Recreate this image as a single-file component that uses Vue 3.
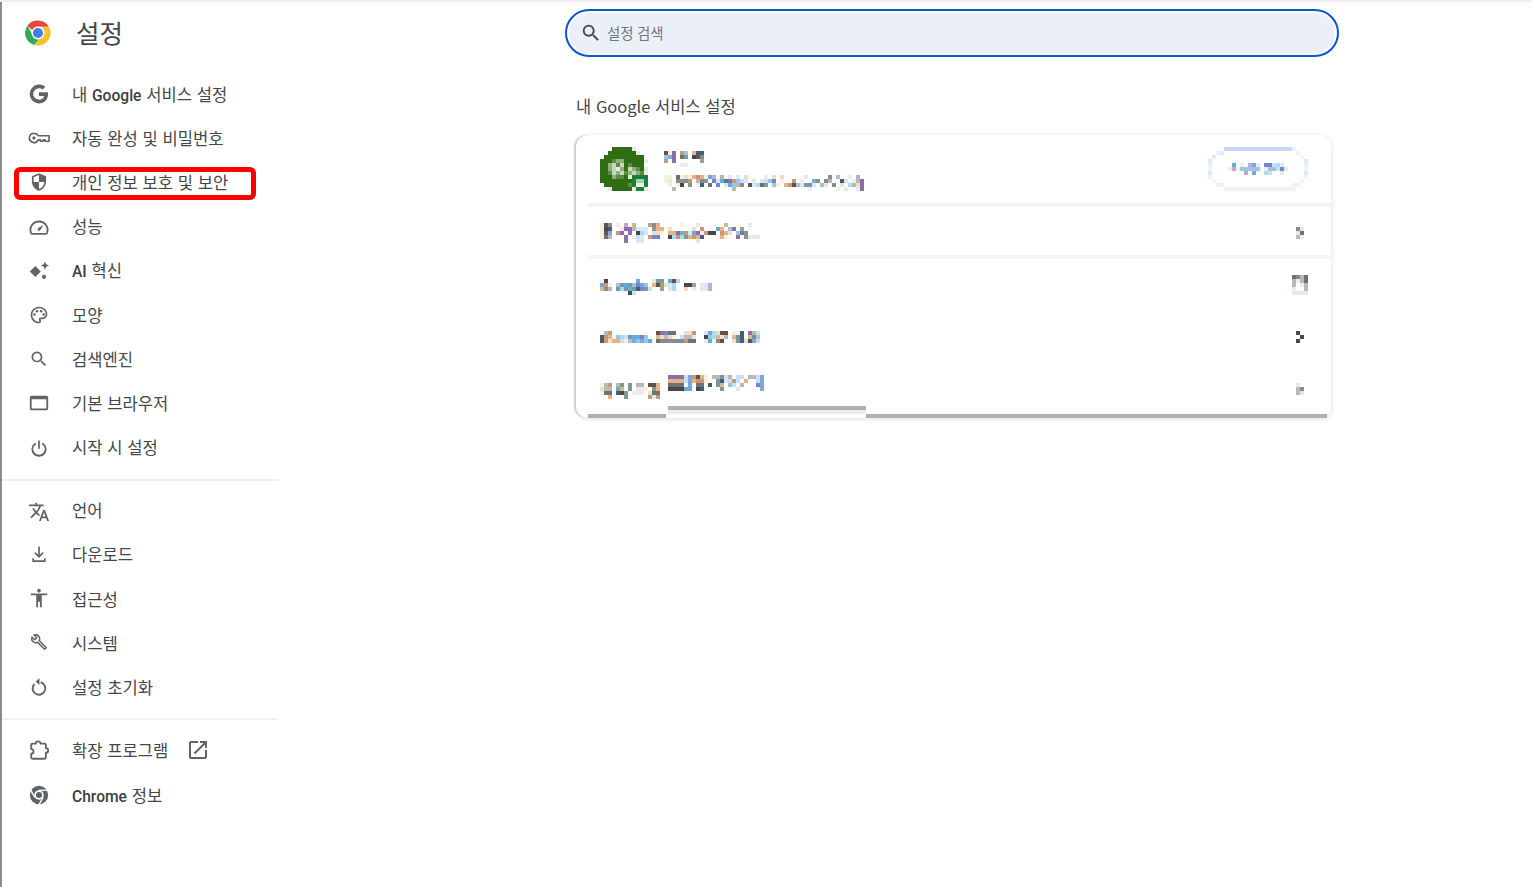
<template>
  <div class="page">
    <aside class="sidebar">
      <div class="brand">
        <svg class="chrome-logo" viewBox="0 0 24 24">
          <path d="M12 0.5a11.5 11.5 0 0 1 9.96 5.75H12a5.75 5.75 0 0 0-5.2 3.3L2.2 5.3A11.5 11.5 0 0 1 12 0.5z" fill="#e8453c" />
          <path d="M2.2 5.3l4.7 8.1a5.75 5.75 0 0 0 6.6 4.2L8.4 23A11.5 11.5 0 0 1 2.2 5.3z" fill="#34a853" />
          <path d="M21.96 6.25A11.5 11.5 0 0 1 9 23.1l4.9-5.9a5.75 5.75 0 0 0 2.3-9.5l-.2-1.45z" fill="#fbc02d" />
          <circle cx="12" cy="12" r="6" fill="#fff" />
          <circle cx="12" cy="12" r="4.7" fill="#3f7ee8" />
        </svg>
        <h1 class="brand-title">설정</h1>
      </div>

      <nav class="nav-group first">
        <a v-for="item in navTop" :key="item.label" class="nav-item" :class="{ marked: item.marked }">
          <svg class="nav-icon" :viewBox="item.box || smallBox" v-html="item.icon"></svg>
          <span class="nav-label">
            <template v-for="part in split(item.label)" :key="part.text">
              <b v-if="part.latin" class="latin">{{ part.text }}</b>
              <template v-else>{{ part.text }}</template>
            </template>
          </span>
        </a>
      </nav>
      <div class="divider"></div>
      <nav class="nav-group middle">
        <a v-for="item in navMiddle" :key="item.label" class="nav-item">
          <svg class="nav-icon" :viewBox="item.box || smallBox" v-html="item.icon"></svg>
          <span class="nav-label">{{ item.label }}</span>
        </a>
      </nav>
      <div class="divider"></div>
      <nav class="nav-group last">
        <a v-for="item in navBottom" :key="item.label" class="nav-item">
          <svg class="nav-icon" :viewBox="item.box || smallBox" v-html="item.icon"></svg>
          <span class="nav-label">
            <template v-for="part in split(item.label)" :key="part.text">
              <b v-if="part.latin" class="latin">{{ part.text }}</b>
              <template v-else>{{ part.text }}</template>
            </template>
          </span>
          <svg v-if="item.external" class="external" viewBox="0 0 24 24">
            <path d="M19 19H5V5h7V3H5c-1.11 0-2 .9-2 2v14c0 1.1.89 2 2 2h14c1.1 0 2-.9 2-2v-7h-2v7zM14 3v2h3.59l-9.83 9.83 1.41 1.41L19 6.41V10h2V3h-7z" />
          </svg>
        </a>
      </nav>
    </aside>

    <main class="content">
      <div class="search">
        <svg class="search-icon" viewBox="0 0 24 24">
          <path d="M15.5 14h-.79l-.28-.27A6.471 6.471 0 0 0 16 9.5 6.5 6.5 0 1 0 9.5 16c1.61 0 3.09-.59 4.23-1.57l.27.28v.79l5 4.99L20.49 19l-4.99-5zm-6 0C7.01 14 5 11.99 5 9.5S7.01 5 9.5 5 14 7.01 14 9.5 11.99 14 9.5 14z" />
        </svg>
        <span class="search-text">설정 검색</span>
      </div>

      <section class="section">
        <h2 class="section-title">내 Google 서비스 설정</h2>
        <div class="card">
          <div class="row row-account">
            <svg class="mosaic" :width="48" :height="44" shape-rendering="crispEdges">
              <rect v-for="(c, i) in cells(avatarRows)" :key="i" :x="c.x" :y="c.y" width="4" height="4" :fill="c.fill" />
            </svg>
            <div class="account-text">
              <svg class="mosaic" width="44" height="16" shape-rendering="crispEdges">
                <rect v-for="(c, i) in cells(nameRows)" :key="i" :x="c.x" :y="c.y" width="4" height="4" :fill="c.fill" />
              </svg>
              <svg class="mosaic" width="204" height="20" shape-rendering="crispEdges">
                <rect v-for="(c, i) in cells(emailRows)" :key="i" :x="c.x" :y="c.y" width="4" height="4" :fill="c.fill" />
              </svg>
            </div>
            <svg class="mosaic" width="100" height="44" shape-rendering="crispEdges">
              <rect v-for="(c, i) in cells(buttonRows)" :key="i" :x="c.x" :y="c.y" width="4" height="4" :fill="c.fill" />
            </svg>
          </div>
          <div v-for="row in rows" :key="row.id" class="row row-link" :class="{ ruled: row.ruled }">
            <svg class="mosaic" width="180" height="24" shape-rendering="crispEdges" :style="{ marginTop: row.top + 'px' }">
              <rect v-for="(c, i) in cells(row.cells)" :key="i" :x="c.x" :y="c.y" width="4" height="4" :fill="c.fill" />
            </svg>
            <div class="arrow-slot" :style="{ marginTop: row.arrowTop + 'px' }">
              <svg class="mosaic" :width="row.arrow[0].length * 4" :height="row.arrow.length * 4" shape-rendering="crispEdges">
                <rect v-for="(c, i) in cells(row.arrow)" :key="i" :x="c.x" :y="c.y" width="4" height="4" :fill="c.fill" />
              </svg>
            </div>
          </div>
          <div class="bottom-patch"></div>
        </div>
      </section>
    </main>
  </div>
</template>

<script setup>
const smallBox = '-1.2 -1.2 26.4 26.4'
const largeBox = '0 0 24 24'

const palette = {
  a: '#8a6fa8', b: '#7fa6dc', c: '#9cc4e8', d: '#d8e8f4', e: '#eadfc8', f: '#c89878',
  g: '#5a5a5a', h: '#8a8a8a', i: '#b8b8b8', j: '#e8e8e8', k: '#3c5f80', l: '#7a9a9a',
  m: '#e4b484', n: '#5ab0e0', o: '#c8e0f8', p: '#6a5040', q: '#98a884', r: '#f6f0dc',
  s: '#484848', t: '#7088c8', u: '#c0a8d8', v: '#f2eaf2', w: '#a8dcf6', x: '#707070',
  G: '#2f6d13', L: '#8fae7c', M: '#c8d8bc', N: '#5d8a48', W: '#e6eee0', B: '#1a7f37', S: '#a8d0b4',
  A: '#c5d8f5', Y: '#edf2fb', Z: '#dfe8fa'
}

const cells = (rows) => {
  const out = []
  rows.forEach((line, y) => {
    ;[...line].forEach((ch, x) => {
      if (ch !== '.') out.push({ x: x * 4, y: y * 4, fill: palette[ch] })
    })
  })
  return out
}

const split = (label) =>
  label.split(/([A-Za-z]+)/).filter(Boolean).map((text) => ({ text, latin: /^[A-Za-z]/.test(text) }))

const avatarRows = [
  '...GGGGGj...',
  '..GGGGGGGj..',
  '.GGGGGGGGGG.',
  'GGGNLLGGGGGj',
  'GGLMNMGNGGG.',
  'GGLMWLGMLNGj',
  'GGNMLMNLMLNj',
  'GGGLNNGWBBBB',
  'GGGGGGGGBSSB',
  '.GGGGGGNBWWB',
  '..jGGGGGjBBj'
]

const nameRows = [
  'pra.fc.mkk.',
  'cba.xl.sgh.',
  'f.a......q.',
  '....vv.....'
]

const emailRows = [
  '..................................................',
  'rr.xrermfmrnu.i.j.j.e....v.e.e.....j.....h.c..v.u.',
  'rj.hlhf.ihl.tdnxafcod.j.doct.r..f.v..bl.hi..pd.ria',
  '.r.rs.l.rk.x.t.dncih.gdwxl.cr.mfpcdlld.ij.h.d.wiea',
  '..i..............i..................v......r.j..va'
]

const buttonRows = [
  '....AAAAAAAAAAAAAAAAAY...',
  '..YZ..................Y..',
  '.Z.....................Y.',
  'Z.......................Z',
  'Y.....n.r.ubv.ttowj.....Y',
  'Y....vurccccc.vccotj....Y',
  'Z........u.b..wo..j.....Z',
  'Y.......................Y',
  '.Y.....................Y.',
  '..YY.................YY..',
  '....YYYYYYYYYYYYYYYYYY...'
]

const rows = [
  {
    id: 'more',
    top: 16,
    arrowTop: 20,
    ruled: true,
    cells: [
      'rgh.v.u.m...fhm.....r...j......m.....j..',
      'rsg..vaaiddd.lmm.e.....e.f...nm.ca.q....',
      'rgb.fa.a.swd.eer.mmabfdnavfss.fme.cal...',
      'rxi...a.vod.ftt..swfwlmfmk....mr..a.ljjj',
      '......a..dd.............d...............'
    ],
    arrow: ['hj', 'jx', 'iv']
  },
  {
    id: 'account',
    top: 20,
    arrowTop: 16,
    cells: [
      'rs.......b...jll.npw.........',
      'nfr.clnlctbc.mpqedw..ssq.jdu',
      'mhi.lwlnlktlo..q.dw..e.v.jju',
      '.......so...................'
    ],
    arrow: ['xhix', 'ivix', 'i.vi', 'v..i', 'jjjj']
  },
  {
    id: 'chrome',
    top: 20,
    arrowTop: 20,
    cells: [
      '.if...........patxx..eef..dbwepp.rrk.aio',
      'kfmrcwolnntc..momor.oiij..scwmei.mhk.mhc',
      'pfemmorcbcbcn.xhhhhhhfxx..jnrhp..elkekbo'
    ],
    arrow: ['s.', '.s', 's.']
  },
  {
    id: 'sync',
    top: 12,
    arrowTop: 20,
    cells: [
      '.................aaaaobfpmr.iilei.oo.iiob',
      '.................mmmmobmffr..lkdofo.m..ob',
      'rif.il.l.ii.ppm..xxxx.b.xx.k.lm.co.i...tb',
      'eii.nm.l.jjr.lm..ssssnn.sk....l...d.....b',
      'rxx.ksl.vvv.exx',
      '..m...l.....fdf'
    ],
    arrow: ['j.', 'ih', 'ij']
  }
]

const navTop = [
  { label: '내 Google 서비스 설정', box: largeBox, icon: '<path d="M21.6 10.2H12v3.9h5.5c-.6 2.7-2.8 4.2-5.5 4.2a6.3 6.3 0 1 1 4-11.2l2.9-2.9A10.3 10.3 0 1 0 12 22.3c5.2 0 9.9-3.7 9.9-10.3 0-.6-.1-1.2-.3-1.8z" />' },
  { label: '자동 완성 및 비밀번호', box: largeBox, icon: '<path d="M6.5 7a5 5 0 1 0 4.6 7h2.4v1.5h3V14h2v1.5H23V9.500H11.100A5 5 0 0 0 6.500 7z" fill="none" stroke="currentColor" stroke-width="1.8" stroke-linejoin="round" /><circle cx="6.500" cy="12" r="1.800" />' },
  { label: '개인 정보 보호 및 보안', marked: true, icon: '<path d="M12 1.5L3.500 5v6c0 5.300 3.600 10.200 8.500 11.500 4.900-1.300 8.500-6.200 8.500-11.500V5L12 1.500zm0 10.500h6.500c-.5 3.900-3 7.400-6.500 8.500V12H5.500V6.300L12 3.500V12z" />' },
  { label: '성능', box: largeBox, icon: '<path d="M5 19.500h14a2 2 0 0 0 1.800-1.100A9.300 9.300 0 0 0 12 6a9.300 9.300 0 0 0-8.800 12.400A2 2 0 0 0 5 19.500z" fill="none" stroke="currentColor" stroke-width="2" /><path d="M10.600 15.500a2 2 0 0 0 2.800 0l3.600-5.700-5.700 3.200a2 2 0 0 0-.7 2.500z" />' },
  { label: 'AI 혁신', box: largeBox, icon: '<path d="M8 6.500l6 6-6 6-6-6zM18.500 1.500l1.300 3.200L23 6l-3.200 1.300L18.500 10.500l-1.300-3.200L14 6l3.200-1.300zM17.500 16a2.300 2.300 0 1 1 0 4.600 2.300 2.300 0 0 1 0-4.600z" />' },
  { label: '모양', icon: '<path d="M12 22C6.490 22 2 17.510 2 12S6.490 2 12 2s10 4.040 10 9c0 3.310-2.690 6-6 6h-1.770c-.28 0-.5.220-.5.500 0 .120.050.230.130.330.410.470.640 1.060.640 1.670A2.500 2.500 0 0 1 12 22zm0-18c-4.410 0-8 3.590-8 8s3.590 8 8 8c.28 0 .5-.22.5-.5a.54.54 0 0 0-.14-.35c-.41-.46-.63-1.050-.63-1.650a2.500 2.500 0 0 1 2.500-2.500H16c2.210 0 4-1.790 4-4 0-3.860-3.590-7-8-7z" /><circle cx="6.500" cy="11.500" r="1.500" /><circle cx="9.500" cy="7.500" r="1.500" /><circle cx="14.500" cy="7.500" r="1.500" /><circle cx="17.500" cy="11.500" r="1.500" />' },
  { label: '검색엔진', icon: '<path d="M15.500 14h-.79l-.28-.27A6.471 6.471 0 0 0 16 9.500 6.500 6.500 0 1 0 9.500 16c1.610 0 3.090-.59 4.230-1.570l.27.28v.79l5 4.990L20.490 19l-4.990-5zm-6 0C7.010 14 5 11.990 5 9.500S7.010 5 9.500 5 14 7.010 14 9.500 11.990 14 9.500 14z" />' },
  { label: '기본 브라우저', box: largeBox, icon: '<path d="M20 4H4c-1.100 0-2 .9-2 2v12c0 1.100.9 2 2 2h16c1.100 0 2-.9 2-2V6c0-1.100-.9-2-2-2zm0 14H4V8h16v10z" />' },
  { label: '시작 시 설정', icon: '<path d="M11 3h2v10h-2z" /><path d="M16.500 5.800l-1.300 1.500A6.900 6.900 0 0 1 19 13a7 7 0 0 1-14 0 6.900 6.900 0 0 1 3.800-5.700L7.500 5.800A9 9 0 1 0 16.500 5.800z" />' }
]

const navMiddle = [
  { label: '언어', box: '0 -2 24 24', icon: '<path d="M12.870 15.070l-2.540-2.510.03-.03c1.740-1.940 2.980-4.170 3.710-6.530H17V4h-7V2H8v2H1v1.990h11.170C11.500 7.920 10.440 9.750 9 11.350 8.070 10.320 7.300 9.190 6.690 8h-2c.73 1.630 1.730 3.170 2.980 4.560l-5.090 5.020L4 19l5-5 3.110 3.110.76-2.040zM18.500 10h-2L12 22h2l1.120-3h4.750L21 22h2l-4.500-12zm-2.620 7l1.620-4.330L19.120 17h-3.240z" />' },
  { label: '다운로드', icon: '<path d="M11 3h2v10l3.300-3.300 1.400 1.400L12 16.800l-5.700-5.700 1.400-1.400L11 13zM4 17h2v2.500h12V17h2v4.500H4z" />' },
  { label: '접근성', box: largeBox, icon: '<path d="M12 2c1.100 0 2 .9 2 2s-.9 2-2 2-2-.9-2-2 .9-2 2-2zm9 7h-6v13h-2v-6h-2v6H9V9H3V7h18v2z" />' },
  { label: '시스템', box: '-3 -3 30 30', icon: '<path d="M22.610 18.990l-9.080-9.080c.93-2.340.45-5.100-1.440-7C9.790.61 6.210.4 3.660 2.260L7.500 6.110 6.080 7.520 2.250 3.690C.39 6.230.6 9.820 2.900 12.110c1.860 1.860 4.570 2.350 6.890 1.480l9.110 9.110c.39.39 1.020.39 1.410 0l2.300-2.300c.4-.38.4-1.010 0-1.410zm-3 1.600l-9.460-9.460c-.61.45-1.290.72-2 .82-1.360.2-2.790-.21-3.830-1.250C3.370 9.760 2.930 8.500 3 7.260l3.090 3.090 4.240-4.240-3.090-3.090c1.240-.07 2.490.37 3.440 1.310 1.080 1.080 1.490 2.570 1.240 3.960-.12.71-.42 1.370-.88 1.960l9.450 9.450-.88.880z" />' },
  { label: '설정 초기화', icon: '<path d="M14 6.300a7.600 7.600 0 1 1-7.400 1.900" fill="none" stroke="currentColor" stroke-width="2.300" /><path d="M12.500 1.500L8 5.500l4.500 4z" />' }
]

const navBottom = [
  { label: '확장 프로그램', external: true, box: largeBox, icon: '<path d="M5 5h3.500a2.500 2.500 0 0 1 5 0H18a1.500 1.500 0 0 1 1.500 1.500V10a2.500 2.500 0 0 1 0 5v5a1.500 1.500 0 0 1-1.500 1.500H5A1.500 1.500 0 0 1 3.500 20v-4a2.500 2.500 0 0 0 0-5V6.500A1.500 1.500 0 0 1 5 5z" fill="none" stroke="currentColor" stroke-width="2" stroke-linejoin="round" />' },
  { label: 'Chrome 정보', box: largeBox, icon: '<circle cx="12" cy="12" r="10" /><circle cx="12" cy="12" r="5.200" fill="#fff" /><circle cx="12" cy="12" r="3.300" /><g stroke="#fff" stroke-width="1.400"><path d="M12 6.800H22" /><path d="M12 6.800H22" transform="rotate(120 12 12)" /><path d="M12 6.800H22" transform="rotate(240 12 12)" /></g>' }
]
</script>

<style scoped>
.page {
  display: flex;
  min-height: 887px;
  border-top: 2px solid #f3edf5;
  box-sizing: border-box;
  font-family: "Noto Sans CJK KR", "Noto Sans", sans-serif;
  color: #3c4043;
  background: #fff;
}

.sidebar {
  width: 278px;
  flex-shrink: 0;
  box-sizing: border-box;
  border-left: 2px solid #8c8c8c;
}

.brand {
  display: flex;
  align-items: center;
  height: 61px;
  padding-left: 23px;
  box-sizing: border-box;
}

.chrome-logo {
  width: 26px;
  height: 26px;
}

.brand-title {
  margin: -2px 0 0 25px;
  font-size: 25.5px;
  font-weight: 400;
  color: #44474a;
}

.nav-group {
  display: flex;
  flex-direction: column;
  padding: 8px 0;
}

.nav-group.first {
  padding: 9px 0 9px;
}

.nav-group.middle {
  padding: 7px 0 9px;
}

.nav-group.last {
  gap: 1px;
}

.nav-item {
  display: flex;
  align-items: center;
  height: 44.2px;
  padding-left: 25.5px;
  font-size: 16.6px;
  word-spacing: 1px;
  color: #44474a;
  position: relative;
}

.nav-label {
  margin-top: -1px;
}

.middle .nav-label {
  margin-top: 1px;
}

.last .nav-label {
  margin-top: 0;
}

.latin {
  font-family: Roboto, "Noto Sans", sans-serif;
  font-size: 15.6px;
  font-weight: 500;
  color: #3c4043;
}

.nav-icon {
  width: 22px;
  height: 22px;
  fill: currentColor;
  color: #606368;
  flex-shrink: 0;
  margin-right: 22.5px;
}

.nav-item.marked::before {
  content: '';
  position: absolute;
  left: 12px;
  top: 7px;
  width: 242px;
  height: 33px;
  box-sizing: border-box;
  border: 5px solid #ff0000;
  border-radius: 6px;
}

.external {
  width: 24px;
  height: 24px;
  margin-left: 18px;
  fill: #606368;
}

.divider {
  height: 2px;
  background: #f1f1f1;
}

.content {
  flex: 1;
  padding: 7px 0 0 287px;
}

.search {
  width: 774px;
  height: 48px;
  box-sizing: border-box;
  display: flex;
  align-items: center;
  padding-left: 13px;
  border: 2px solid #0b57d0;
  border-radius: 24px;
  background: #ebeff7;
  box-shadow: inset 0 0 0 2px #fff;
}

.search-icon {
  width: 22px;
  height: 22px;
  fill: #44474a;
}

.search-text {
  margin-left: 5px;
  margin-top: -1px;
  font-size: 14.5px;
  color: #74777b;
}

.section {
  width: 755px;
  margin: 37px 0 0 11px;
}

.section-title {
  margin: 0 0 17px;
  font-size: 16.5px;
  word-spacing: 1px;
  font-weight: 400;
  line-height: 24px;
  color: #44474a;
}

.card {
  position: relative;
  border-radius: 12px;
  background: #fff;
  height: 283px;
  box-shadow: -2px 0 1px #d0d0d0, 2px 2px 4px #efefef, 0 0 4px #eee;
}

.row {
  position: relative;
  display: flex;
  box-sizing: border-box;
}

.row-account {
  height: 72px;
  align-items: flex-start;
  padding: 12px 23px 0 24px;
}

.row-account::after,
.row-link.ruled::after {
  content: '';
  position: absolute;
  left: 12px;
  right: 0;
  bottom: 0;
  height: 4px;
  background: #f4f4f4;
}

.row-link {
  height: 52px;
  align-items: flex-start;
  justify-content: space-between;
  padding: 0 23px 0 24px;
}

.mosaic {
  display: block;
}

.arrow-slot {
  width: 16px;
  display: flex;
  justify-content: center;
}

.account-text {
  display: flex;
  flex-direction: column;
  gap: 4px;
  margin: 4px 0 0 16px;
  flex: 1;
}

.bottom-patch {
  position: absolute;
  left: 92px;
  bottom: 8px;
  width: 198px;
  height: 4px;
  background: #b0b0b0;
  box-shadow: 0 4px 0 #ececec;
}

.card::after {
  content: '';
  position: absolute;
  left: 12px;
  right: 4px;
  bottom: 0;
  height: 4px;
  background: linear-gradient(to right, #b0b0b0 78px, #fff 78px, #fff 278px, #b0b0b0 278px);
  box-shadow: 0 2px 2px #eee;
}
</style>

<style>
html, body {
  background: #fff;
}
</style>
